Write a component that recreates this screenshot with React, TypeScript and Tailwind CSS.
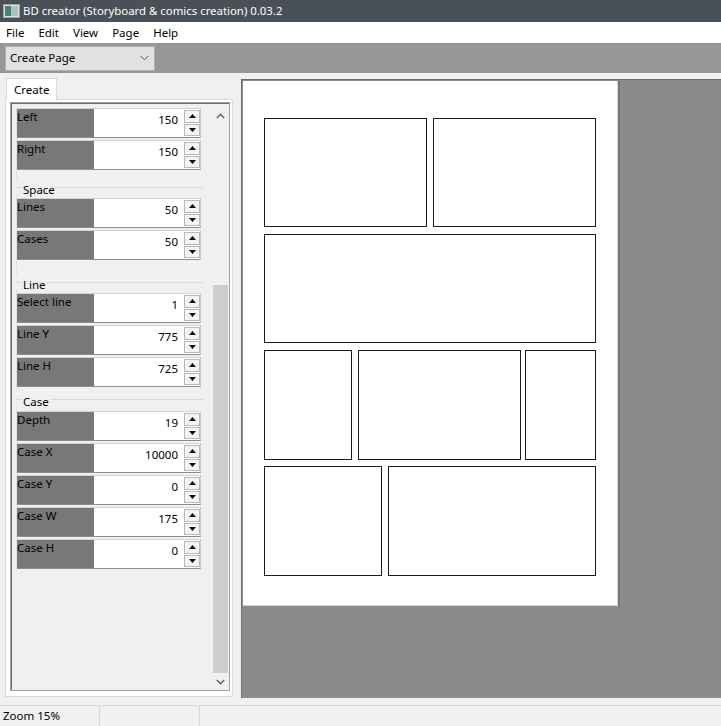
import React from "react";

const font = { fontFamily: '"Noto Sans", "Open Sans", sans-serif' };

function SpinButtons() {
  return (
    <div className="flex flex-col w-[16px] h-full pt-[1px] pb-[1px] gap-[1px] bg-white">
      <div className="flex-1 border border-[#b9b9b9] bg-[#f4f4f4] flex items-center justify-center">
        <svg width="7" height="4" viewBox="0 0 7 4"><path d="M0 4 L3.5 0 L7 4 Z" fill="#111" /></svg>
      </div>
      <div className="flex-1 border border-[#b9b9b9] bg-[#f4f4f4] flex items-center justify-center">
        <svg width="7" height="4" viewBox="0 0 7 4"><path d="M0 0 L3.5 4 L7 0 Z" fill="#111" /></svg>
      </div>
    </div>
  );
}

function Row({ label, value }: { label: string; value: string }) {
  return (
    <div className="flex h-[30px] w-[184px] mb-[2px] border-t border-[#d2d2d2] border-b border-b-[#8e8e8e] border-r border-r-[#c8c8c8]">
      <div className="w-[77px] h-full bg-[#787878] text-[11.5px] leading-[16px] text-black whitespace-nowrap overflow-hidden">
        {label}
      </div>
      <div className="flex-1 h-full bg-white flex items-start justify-end pr-[6px] pt-[3px] text-[11.5px] leading-[16px] text-black">
        {value}
      </div>
      <SpinButtons />
    </div>
  );
}

function GroupHeader({ title }: { title: string }) {
  return (
    <div className="flex items-center h-[14px] w-[187px]">
      <div className="w-[6px] h-[1px] bg-[#dadada]" />
      <span className="text-[11.5px] leading-[14px] px-[1px] text-black translate-y-[3px]">{title}</span>
      <div className="flex-1 h-[1px] bg-[#dadada]" />
    </div>
  );
}

function Panel({ w, ml = 0 }: { w: number; ml?: number }) {
  return (
    <div
      className="h-full border border-[#1c1c1c] bg-white shrink-0"
      style={{ width: w, marginLeft: ml }}
    />
  );
}

export default function App() {
  return (
    <div className="w-[721px] h-[726px] flex flex-col bg-[#f0f0f0] overflow-hidden text-black" style={font}>
      {/* Title bar */}
      <div className="h-[22px] bg-[#4a5057] flex items-center pl-[3px] shrink-0">
        <svg width="17" height="14" viewBox="0 0 17 14" className="mr-[3px]">
          <rect x="0.5" y="0.5" width="16" height="13" fill="#d9e2dd" stroke="#9aa3a0" />
          <rect x="2" y="2" width="6" height="10" fill="#4d7f70" />
          <rect x="8" y="2" width="7" height="10" fill="#a8c6b7" />
        </svg>
        <span className="text-white text-[11.4px] leading-[16px] whitespace-nowrap">
          BD creator (Storyboard &amp; comics creation) 0.03.2
        </span>
      </div>

      {/* Menu bar */}
      <div className="h-[21px] bg-white flex items-center text-[11.5px] leading-[16px] shrink-0">
        <span className="ml-[6px]">File</span>
        <span className="ml-[14px]">Edit</span>
        <span className="ml-[14px]">View</span>
        <span className="ml-[14px]">Page</span>
        <span className="ml-[14px]">Help</span>
      </div>

      {/* Toolbar */}
      <div className="h-[30px] bg-[#979797] flex items-center pl-[5px] shrink-0">
        <div className="w-[150px] h-[25px] bg-[#e1e1e1] border border-[#adadad] flex items-center justify-between pl-[4px] pr-[5px]">
          <span className="text-[11.5px] leading-[16px]">Create Page</span>
          <svg width="9" height="6" viewBox="0 0 9 6"><path d="M0.5 0.8 L4.5 4.8 L8.5 0.8" fill="none" stroke="#555" strokeWidth="1" /></svg>
        </div>
      </div>

      {/* Main */}
      <div className="flex flex-1 min-h-0">
        {/* Left panel */}
        <div className="w-[241px] h-full pl-[5px] pt-[5px] flex flex-col shrink-0">
          <div className="ml-[1px] w-[51px] h-[22px] bg-white border-t border-l border-r border-[#d9d9d9] flex items-center pl-[7px] text-[11.5px] leading-[16px] relative z-10">
            Create
          </div>
          <div className="w-[228px] h-[598px] -mt-[1px] bg-white border border-[#d9d9d9] pl-[4px] pt-[2px] pr-[2px]">
            <div className="w-[220px] h-[589px] border border-[#a0a0a0] flex">
              <div className="flex-1 h-full border-l border-t border-[#6d6d6d] bg-[#f0f0f0] flex overflow-hidden">
                <div className="flex-1 pl-[4px] pt-[4px] flex flex-col">
                  <div className="border-l border-[#e2e2e2] w-[188px]">
                    <Row label="Left" value="150" />
                    <Row label="Right" value="150" />
                    <div className="h-[8px]" />
                  </div>
                  <GroupHeader title="Space" />
                  <div className="border-l border-[#e2e2e2] w-[188px] pt-[4px]">
                    <Row label="Lines" value="50" />
                    <Row label="Cases" value="50" />
                    <div className="h-[13px]" />
                  </div>
                  <GroupHeader title="Line" />
                  <div className="border-l border-[#e2e2e2] w-[188px] pt-[4px]">
                    <Row label="Select line" value="1" />
                    <Row label="Line Y" value="775" />
                    <Row label="Line H" value="725" />
                    <div className="h-[3px]" />
                  </div>
                  <GroupHeader title="Case" />
                  <div className="border-l border-[#e2e2e2] w-[188px] pt-[5px]">
                    <Row label="Depth" value="19" />
                    <Row label="Case X" value="10000" />
                    <Row label="Case Y" value="0" />
                    <Row label="Case W" value="175" />
                    <Row label="Case H" value="0" />
                  </div>
                </div>
                {/* Scrollbar */}
                <div className="w-[17px] h-full bg-[#f0f0f0] flex flex-col">
                  <div className="h-[17px] pt-[9px] flex items-start justify-center">
                    <svg width="9" height="6" viewBox="0 0 9 6"><path d="M0.8 5 L4.5 1.3 L8.2 5" fill="none" stroke="#606060" strokeWidth="1.4" /></svg>
                  </div>
                  <div className="flex-1 flex flex-col">
                    <div className="mt-[164px] h-[388px] mx-[1px] bg-[#cdcdcd]" />
                  </div>
                  <div className="h-[17px] flex items-center justify-center">
                    <svg width="9" height="6" viewBox="0 0 9 6"><path d="M0.8 1 L4.5 4.7 L8.2 1" fill="none" stroke="#606060" strokeWidth="1.4" /></svg>
                  </div>
                </div>
              </div>
            </div>
          </div>
        </div>

        {/* Canvas */}
        <div className="flex-1 mt-[6px] mb-[7px] bg-[#8b8b8b] border-t border-l border-[#6e6e6e] pl-[1px] pt-[1px] overflow-hidden">
          <div className="w-[375px] h-[525px] bg-white border-r border-b border-[#d4d4d4] shadow-[2px_0_0_#787878] pl-[21px] pt-[37px] flex flex-col">
            <div className="flex h-[109px]">
              <Panel w={163} />
              <Panel w={163} ml={6} />
            </div>
            <div className="flex h-[109px] mt-[7px]">
              <Panel w={332} />
            </div>
            <div className="flex h-[110px] mt-[7px]">
              <Panel w={88} />
              <Panel w={163} ml={6} />
              <Panel w={71} ml={4} />
            </div>
            <div className="flex h-[110px] mt-[6px]">
              <Panel w={118} />
              <Panel w={208} ml={6} />
            </div>
          </div>
        </div>
      </div>

      {/* Status bar */}
      <div className="h-[21px] border-t border-[#d7d7d7] flex items-center text-[11.5px] leading-[16px] shrink-0">
        <div className="w-[100px] h-full flex items-center pl-[3px] border-r border-[#d7d7d7]">Zoom 15%</div>
        <div className="w-[100px] h-full border-r border-[#d7d7d7]" />
      </div>
    </div>
  );
}
